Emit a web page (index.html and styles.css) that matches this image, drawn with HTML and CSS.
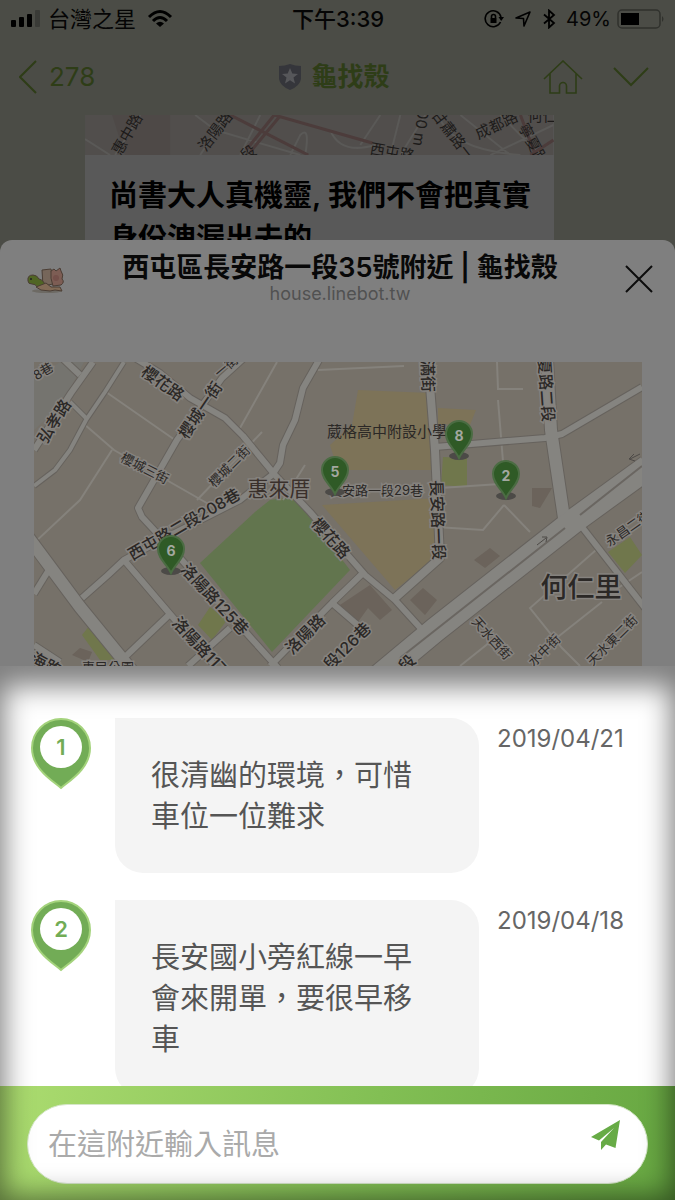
FILE: index.html
```
<!DOCTYPE html>
<html lang="zh-Hant">
  <head>
    <meta charset="utf-8">
    <title>西屯區長安路一段35號附近 | 龜找殼</title>
    <meta name="viewport" content="width=device-width, initial-scale=1">
    <link rel="stylesheet" href="styles.css">
  </head>
  <body>
    <div class="chat">
      <div class="status-bar">
        <div class="status-left">
          <svg width="30" height="18" viewBox="0 0 30 18">
            <rect x="0" y="10" width="5" height="7" rx="1"/>
            <rect x="8" y="7" width="5" height="10" rx="1"/>
            <rect x="16" y="4" width="5" height="13" rx="1"/>
            <rect x="24" y="0" width="5" height="17" rx="1" fill="#3a3b37"/>
          </svg>
          <span>台灣之星</span>
          <svg class="wifi" width="26" height="20" viewBox="0 0 26 20" fill="none" stroke="#000" stroke-width="3">
            <path d="M2 8Q13 -3 24 8M6 12Q13 5 20 12"/>
            <path d="M13 18L9 14.500Q13 11 17 14.500Z" fill="#000" stroke="none"/>
          </svg>
        </div>
        <div class="status-time">下午3:39</div>
        <div class="status-right">
          <svg width="20" height="20" viewBox="0 0 20 20" fill="none" stroke="#000" stroke-width="1.600">
            <path d="M16.500 13A8 8 0 1 1 17 8"/>
            <path d="M14.500 8H20L17.200 12Z" fill="#000" stroke="none"/>
            <path d="M6.500 9H12.500V14H6.500Z" fill="#000" stroke="none"/>
            <path d="M7.500 9V7.500A2 2 0 0 1 11.500 7.500V9"/>
          </svg>
          <svg width="18" height="18" viewBox="0 0 18 18" fill="none" stroke="#000" stroke-width="1.600" stroke-linejoin="round">
            <path d="M2 8L16 2L10 16L9.500 8.500Z"/>
          </svg>
          <svg width="14" height="20" viewBox="0 0 14 20" fill="none" stroke="#000" stroke-width="1.800">
            <path d="M2 5.500L12 14L7 18.500V1.500L12 6L2 14.500"/>
          </svg>
          <span>49%</span>
          <svg width="48" height="22" viewBox="0 0 48 22">
            <rect x="1" y="2" width="42" height="18" rx="4" fill="none" stroke="#30312d" stroke-width="1.500"/>
            <rect x="4" y="5" width="18" height="12" fill="#000"/>
            <path d="M45 8Q48 11 45 14Z" fill="#30312d"/>
          </svg>
        </div>
      </div>
      <div class="nav-bar">
        <a class="back" href="#">
          <svg width="18" height="34" viewBox="0 0 18 34" fill="none" stroke="#2e3d17" stroke-width="2"><path d="M17 1L1 17L17 33"/></svg>
          278
        </a>
        <div class="nav-title">
          <svg width="24" height="26" viewBox="0 0 24 26">
            <path d="M1 2Q7 2 12 0Q17 2 23 2V15Q22 22 12 26Q2 22 1 15Z" fill="#35363b"/>
            <path d="M12 4L14.300 9.500L20 10L15.500 13.500L17 19.500L12 16.200L7 19.500L8.500 13.500L4 10L9.700 9.500Z" fill="#56575a"/>
          </svg>
          <span>龜找殼</span>
        </div>
        <div class="nav-actions">
          <button type="button" aria-label="首頁">
            <svg width="40" height="34" viewBox="0 0 40 34" fill="none" stroke="#2e3d17" stroke-width="1.600"><path d="M1 19L20 1L39 19M7 13V33H16.500V26A3.500 3.500 0 0 1 23.500 26V33H33V13"/></svg>
          </button>
          <button type="button" aria-label="展開">
            <svg width="36" height="20" viewBox="0 0 36 20" fill="none" stroke="#2e3d17" stroke-width="2"><path d="M1 1L18 18L35 1"/></svg>
          </button>
        </div>
      </div>
      <div class="chat-card">
        <svg class="card-map" viewBox="85 115 468 40">
          <rect x="85" y="115" width="468" height="40" fill="#514e4c"/>
          <path d="M112 115H170V155H125Z" fill="#4e4947"/>
          <g fill="none" stroke="#5a5957" stroke-width="2">
            <path d="M85 139L110 155M140 115Q125 140 115 155M226 115L200 155M195 115L215 130L300 155M260 115L240 155M290 155L300 135Q310 125 305 155M330 130Q340 155 375 145M400 115L390 155M425 115L400 155M440 120Q455 150 520 155M460 115L510 155M500 115L540 155M553 125L490 155M380 115L360 145"/>
          </g>
          <g fill="none" stroke="#4c3c3b" stroke-width="3">
            <path d="M230 115L308 155M274 115L246 150M279 117L250 152M274 115L372 143M520 115L535 155M553 140L530 155"/>
          </g>
          <g class="card-labels">
            <text transform="translate(127 134) rotate(-60)">惠中路</text>
            <text transform="translate(215 131) rotate(-52)">洛陽路</text>
            <text transform="translate(248 153) rotate(-35)">段</text>
            <text transform="translate(392 152) rotate(10)">西屯路</text>
            <text transform="translate(421 125) rotate(98)">100 m</text>
            <text transform="translate(453 135) rotate(52)">甘肅路一</text>
            <text transform="translate(496 125) rotate(-25)">成都路</text>
            <text transform="translate(533 144) rotate(62)">寧夏路</text>
            <text transform="translate(542 115)">何仁</text>
          </g>
        </svg>
        <p class="card-title">尚書大人真機靈, 我們不會把真實身份洩漏出去的</p>
      </div>
    </div>

    <div class="sheet">
      <div class="sheet-header">
        <svg class="logo" width="38" height="28" viewBox="0 0 38 28" stroke="#4b3e35" stroke-width="1">
          <ellipse cx="20" cy="25" rx="15" ry="2" fill="#6d6a64" stroke="none"/>
          <path d="M15 4L24 3L26 18L16 20Z" fill="#76665a"/>
          <path d="M24 5L27 3L29 5L33 2L34 5Q37 9 35 13Q38 16 34 19L26 20Q23 12 24 5Z" fill="#7d5d54"/>
          <circle cx="29" cy="12" r="3" fill="#74504a" stroke="none"/>
          <path d="M1 15Q0 9 6 9Q10 9 12 13Q17 14 19 21L10 21Q9 18 5 18Q1 18 1 15Z" fill="#506524"/>
          <path d="M9 21L19 17L24 21L33 21L35 25L28 24L23 25L14 24Z" fill="#826b56"/>
          <circle cx="4" cy="13" r="1" fill="#222" stroke="none"/>
        </svg>
        <div class="sheet-heading">
          <h1>西屯區長安路一段35號附近 | 龜找殼</h1>
          <p>house.linebot.tw</p>
        </div>
        <button type="button" class="close" aria-label="關閉">
          <svg width="28" height="28" viewBox="0 0 28 28" stroke="#0c0c0c" stroke-width="2"><path d="M1 1L27 27M27 1L1 27"/></svg>
        </button>
      </div>

      <svg class="map" viewBox="34 362 608 304">
        <defs>
          <g id="pin">
            <ellipse cx="0" cy="22" rx="10" ry="4" fill="#4c4a47"/>
            <path d="M0 24C-4 15 -13 10 -13 0A13 13 0 0 1 13 0C13 10 4 15 0 24Z" fill="#2f5a26" stroke="#4b6c43" stroke-width="2"/>
          </g>
          <g id="roads" fill="none" stroke-linejoin="round">
            <path class="r6" d="M93 362L71 393L34 450"/>
            <path class="r6" d="M62 358L80 375"/>
            <path class="r4" d="M124 362L105 392L86 420L70 450L55 470L34 486"/>
            <path class="r4" d="M70 402L86 418"/>
            <path class="r6" d="M244 358L222 378L177 440L138 508L142 517L180 558L250 637L278 668"/>
            <path class="r6" d="M135 358L160 373L190 398L225 418L243 436L275 475L310 512L365 575L395 600L425 633"/>
            <path class="r6" d="M319 360L303 388L295 420L283 445L280 463L272 475"/>
            <path class="r6" d="M82 598L108 575L124 560L165 538L240 500L272 475"/>
            <path class="r6" d="M50 568L34 594"/>
            <path class="r6" d="M124 560L170 614L215 666"/>
            <path class="r6" d="M170 614L125 657"/>
            <path class="r6" d="M363 573L332 603L270 666"/>
            <path class="r6" d="M332 603L368 634M230 628L188 666"/>
            <path class="r8" d="M428 360L435 450L440 558L395 598"/>
            <path class="r6" d="M435 447L545 438L562 434L642 387"/>
            <path class="r12" d="M547 360L551 430L564 518"/>
            <path class="r12" d="M28 537L80 607L133 672"/>
            <path class="r6" d="M575 518L645 608"/>
            <path class="r24" d="M375 680L435 630L575 520L648 467"/>
            <path class="r6" d="M34 645L60 662"/>
          </g>
        </defs>
        <rect x="34" y="362" width="608" height="304" fill="#767169"/>
        <path d="M34 380L60 362H84L62 405L34 430Z" fill="#75746f"/>
        <g fill="#7d7358">
          <path d="M358 390L430 393L435 470L338 470L330 445L352 425ZM438 408L476 410L470 425L438 424Z"/>
          <path d="M322 505L437 498L438 556L395 590Z"/>
        </g>
        <path d="M200 563L255 512L270 500L290 497L300 505L350 570L272 652Z" fill="#62754e"/>
        <path d="M443 457L467 458L467 487L441 485ZM198 625L210 607L227 620L212 640ZM82 635L90 625L118 660L100 660ZM608 552L630 537L642 555L625 573Z" fill="#70774c"/>
        <path d="M532 488L552 488L540 508L532 506ZM340 605L370 585L392 610L380 620L368 608L358 622ZM410 600L423 588L437 600L425 615ZM474 560L490 548L500 556L485 568ZM72 655L80 648L92 652L88 662Z" fill="#6b635b"/>
        <path class="lane" d="M106 392L175 440M84 424L114 450L212 506M112 450L80 500L64 515L34 543M262 432L197 500M277 362L240 428M318 370L404 366M497 362L498 389L523 389M498 400L505 486M440 488L500 484M504 505L483 530L436 527M504 505L530 532M596 550L530 608L562 648L580 666M602 602L535 655M490 642L460 666M305 465L283 500M642 572L615 590"/>
        <use href="#roads" class="casing"/>
        <use href="#roads" class="surface"/>
        <path d="M400 658L565 528M580 515L642 466" fill="none" stroke="#6a6661" stroke-width="2"/>
        <path d="M537 545L546 538M542 537L547 537L546 542M640 454L630 459M634 454L629 459L635 461" fill="none" stroke="#4d4a47" stroke-width="1"/>

        <g class="label-s">
          <text transform="translate(43 371) rotate(-30)">8巷</text>
          <text transform="translate(145 468) rotate(27)">櫻城三街</text>
          <text transform="translate(229 466) rotate(-45)">櫻城二街</text>
          <text transform="translate(226 366) rotate(-40)">一街</text>
          <text transform="translate(376 490)">長安路一段29巷</text>
          <text transform="translate(492 638) rotate(48)">天水西街</text>
          <text transform="translate(544 650) rotate(-45)">水中街</text>
          <text transform="translate(612 640) rotate(-45)">天水東二街</text>
          <text transform="translate(628 528) rotate(-35)">永昌二街</text>
          <text transform="translate(108 667)">惠民公園</text>
        </g>
        <text class="label-school" x="387" y="431">葳格高中附設小學</text>
        <g class="label-m">
          <text transform="translate(54 421) rotate(-58)">弘孝路</text>
          <text transform="translate(163 383) rotate(35)">櫻花路</text>
          <text transform="translate(200 410) rotate(-56)">櫻城一街</text>
          <text transform="translate(184 524) rotate(-30)">西屯路二段208巷</text>
          <text transform="translate(215 599) rotate(47)">洛陽路125巷</text>
          <text transform="translate(205 651) rotate(47)">洛陽路117巷</text>
          <text transform="translate(331 538) rotate(48)">櫻花路</text>
          <text transform="translate(305 634) rotate(-45)">洛陽路</text>
          <text transform="translate(347 646) rotate(-45)">段126巷</text>
          <text transform="translate(407 663) rotate(-45)">段</text>
          <text transform="translate(438 520) rotate(88)">長安路一段</text>
          <text transform="translate(428 376) rotate(88)">滿街</text>
          <text transform="translate(546 382) rotate(86)">寧夏路二段</text>
          <text transform="translate(46 664) rotate(28)">海路</text>
        </g>
        <text class="label-l" x="279" y="488">惠來厝</text>
        <text class="label-xl" x="581" y="587">何仁里</text>

        <g class="map-pins">
          <use href="#pin" x="335" y="470"/><text x="335" y="471">5</text>
          <use href="#pin" x="459" y="434"/><text x="459" y="435">8</text>
          <use href="#pin" x="506" y="474"/><text x="506" y="475">2</text>
          <use href="#pin" x="171" y="549"/><text x="171" y="550">6</text>
        </g>
      </svg>
    </div>

    <main class="spotlight">
      <div class="messages">
        <div class="message">
          <div class="message-pin">
            <svg width="60" height="72" viewBox="0 0 60 72">
              <path d="M30 70C22 63 1 51 1 30A29 29 0 0 1 59 30C59 51 38 63 30 70Z" fill="#72ac56" stroke="#a4d37c" stroke-width="2"/>
              <circle cx="30" cy="29" r="21" fill="#fff"/>
              <text x="30" y="37">1</text>
            </svg>
          </div>
          <p class="bubble">很清幽的環境，可惜車位一位難求</p>
          <time class="date">2019/04/21</time>
        </div>
        <div class="message">
          <div class="message-pin">
            <svg width="60" height="72" viewBox="0 0 60 72">
              <path d="M30 70C22 63 1 51 1 30A29 29 0 0 1 59 30C59 51 38 63 30 70Z" fill="#72ac56" stroke="#a4d37c" stroke-width="2"/>
              <circle cx="30" cy="29" r="21" fill="#fff"/>
              <text x="30" y="37">2</text>
            </svg>
          </div>
          <p class="bubble">長安國小旁紅線一早會來開單，要很早移車</p>
          <time class="date">2019/04/18</time>
        </div>
      </div>
      <form class="composer">
        <div class="composer-field">
          <input type="text" placeholder="在這附近輸入訊息" aria-label="在這附近輸入訊息">
          <button type="button" aria-label="送出">
            <svg width="30" height="30" viewBox="0 0 30 30" fill="#67ab46">
              <path d="M29 0L0 17L8 20.500L23 8L10 22V30L15 24.500L24.500 28Z"/>
            </svg>
          </button>
        </div>
      </form>
    </main>
  </body>
</html>
```
FILE: styles.css
```
* {
  box-sizing: border-box;
  margin: 0;
  padding: 0;
}
body {
  height: 100vh;
  display: flex;
  flex-direction: column;
  overflow: hidden;
  background-color: #4b4c46;
  font-family: Inter, "Noto Sans CJK TC", sans-serif;
}
button {
  border: none;
  background: none;
  display: flex;
}
svg {
  display: block;
  flex: none;
}
a {
  text-decoration: none;
}

/* chat behind the sheet */
.chat {
  height: 240px;
  flex: none;
  overflow: hidden;
}
.status-bar {
  height: 38px;
  padding: 0 10px 0 11px;
  display: grid;
  grid-template-columns: 1fr auto 1fr;
  align-items: center;
  font-size: 20px;
  line-height: 24px;
  color: #050505;
}
.status-left {
  display: flex;
  align-items: center;
  gap: 7px;
  font-size: 22px;
}
.wifi {
  margin-left: 4px;
}
.status-time {
  font-size: 22px;
  font-weight: 500;
}
.status-right {
  display: flex;
  justify-content: flex-end;
  align-items: center;
  gap: 10px;
}
.status-right span {
  margin-right: -4px;
}
.nav-bar {
  height: 77px;
  padding: 0 26px 0 19px;
  display: grid;
  grid-template-columns: 1fr auto 1fr;
  align-items: center;
  font-size: 26px;
  line-height: 32px;
  color: #2e3d17;
}
.back {
  display: flex;
  align-items: center;
  gap: 12px;
  color: #2e3d17;
}
.nav-title {
  display: flex;
  align-items: center;
  gap: 9px;
  font-weight: 600;
}
.nav-actions {
  display: flex;
  justify-content: flex-end;
  align-items: center;
  gap: 30px;
}
.chat-card {
  margin: 0 18% 0 85px;
  background-color: #595959;
}
.card-map {
  width: 100%;
}
.card-labels text {
  font-size: 15px;
  fill: #1d1b1a;
  text-anchor: middle;
  dominant-baseline: central;
}
.card-title {
  padding: 19px 16px 19px 24px;
  font-size: 29px;
  line-height: 43px;
  font-weight: 600;
  color: #000;
}

/* link preview sheet */
.sheet {
  flex: none;
  background-color: #7f7f7f;
  border-radius: 12px 12px 0 0;
}
.sheet-header {
  height: 122px;
  padding: 12px 22px 0 27px;
  display: grid;
  grid-template-columns: 1fr auto 1fr;
  align-items: start;
}
.logo {
  margin-top: 14px;
}
.close {
  margin-top: 13px;
  justify-self: end;
}
.sheet-heading {
  text-align: center;
}
.sheet-heading h1 {
  font-size: 27px;
  line-height: 32px;
  font-weight: 600;
  color: #080808;
}
.sheet-heading p {
  font-size: 18px;
  line-height: 20px;
  color: #515151;
}
.map {
  margin: 0 33px 0 34px;
}
.casing {
  --edge: 2px;
  stroke: #66625d;
}
.surface {
  --edge: 0px;
  stroke: #858480;
}
.r4 {
  stroke-width: calc(4px + var(--edge));
}
.r6 {
  stroke-width: calc(6px + var(--edge));
}
.r8 {
  stroke-width: calc(8px + var(--edge));
}
.r12 {
  stroke-width: calc(12px + var(--edge));
}
.r24 {
  stroke-width: calc(24px + var(--edge));
}
.lane {
  fill: none;
  stroke: #85827c;
  stroke-width: 2;
}
.map text {
  text-anchor: middle;
  dominant-baseline: central;
  fill: #2b2826;
  stroke: #85827e;
  stroke-width: 3px;
  paint-order: stroke;
}
.label-s {
  font-size: 13px;
}
.map .label-school {
  font-size: 15px;
  stroke: none;
}
.label-m {
  font-size: 16px;
  font-weight: 500;
}
.map .label-l {
  font-size: 21px;
  fill: #3a302b;
}
.map .label-xl {
  font-size: 27px;
  font-weight: 500;
}
.map .map-pins text {
  font-size: 14px;
  font-weight: 700;
  fill: #a3a8a0;
  stroke: none;
}

/* highlighted area: messages and composer */
.spotlight {
  position: relative;
  flex: 1;
  min-height: 0;
  display: flex;
  flex-direction: column;
  overflow: hidden;
  background-color: #fff;
}
.spotlight::after {
  content: "";
  position: absolute;
  inset: 0 -16px -16px;
  box-shadow: inset 0 0 28px 20px rgba(0, 0, 0, 0.5);
  pointer-events: none;
}
.messages {
  flex: 1;
  min-height: 0;
  padding: 52px 49px 0 31px;
  display: flex;
  flex-direction: column;
  gap: 27px;
  overflow: hidden;
}
.message {
  flex: none;
  display: flex;
  align-items: flex-start;
}
.message-pin text {
  font-size: 22px;
  font-weight: 600;
  fill: #72ac56;
  text-anchor: middle;
}
.bubble {
  flex: 1;
  margin: 0 18px 0 24px;
  padding: 37px 40px 36px 36px;
  border-radius: 0 28px 28px 28px;
  background-color: #f4f4f4;
  font-size: 29px;
  line-height: 41px;
  color: #555;
}
.date {
  width: 129px;
  font-size: 24px;
  line-height: 41px;
  color: #666;
}
.composer {
  flex: none;
  padding: 18px 27px 16px;
  background-image: linear-gradient(100deg, #acdc70, #82bf54 55%, #66a641);
}
.composer-field {
  height: 80px;
  padding: 0 26px 0 20px;
  display: flex;
  border: 1px solid #d5e6c8;
  border-radius: 40px;
  background-color: #fff;
}
.composer-field input {
  flex: 1;
  min-width: 0;
  border: none;
  outline: none;
  background: none;
  font-family: inherit;
  font-size: 29px;
  color: #555;
}
.composer-field input::placeholder {
  color: #aaa;
}
.composer-field button {
  padding-top: 15px;
  align-self: flex-start;
}
```
